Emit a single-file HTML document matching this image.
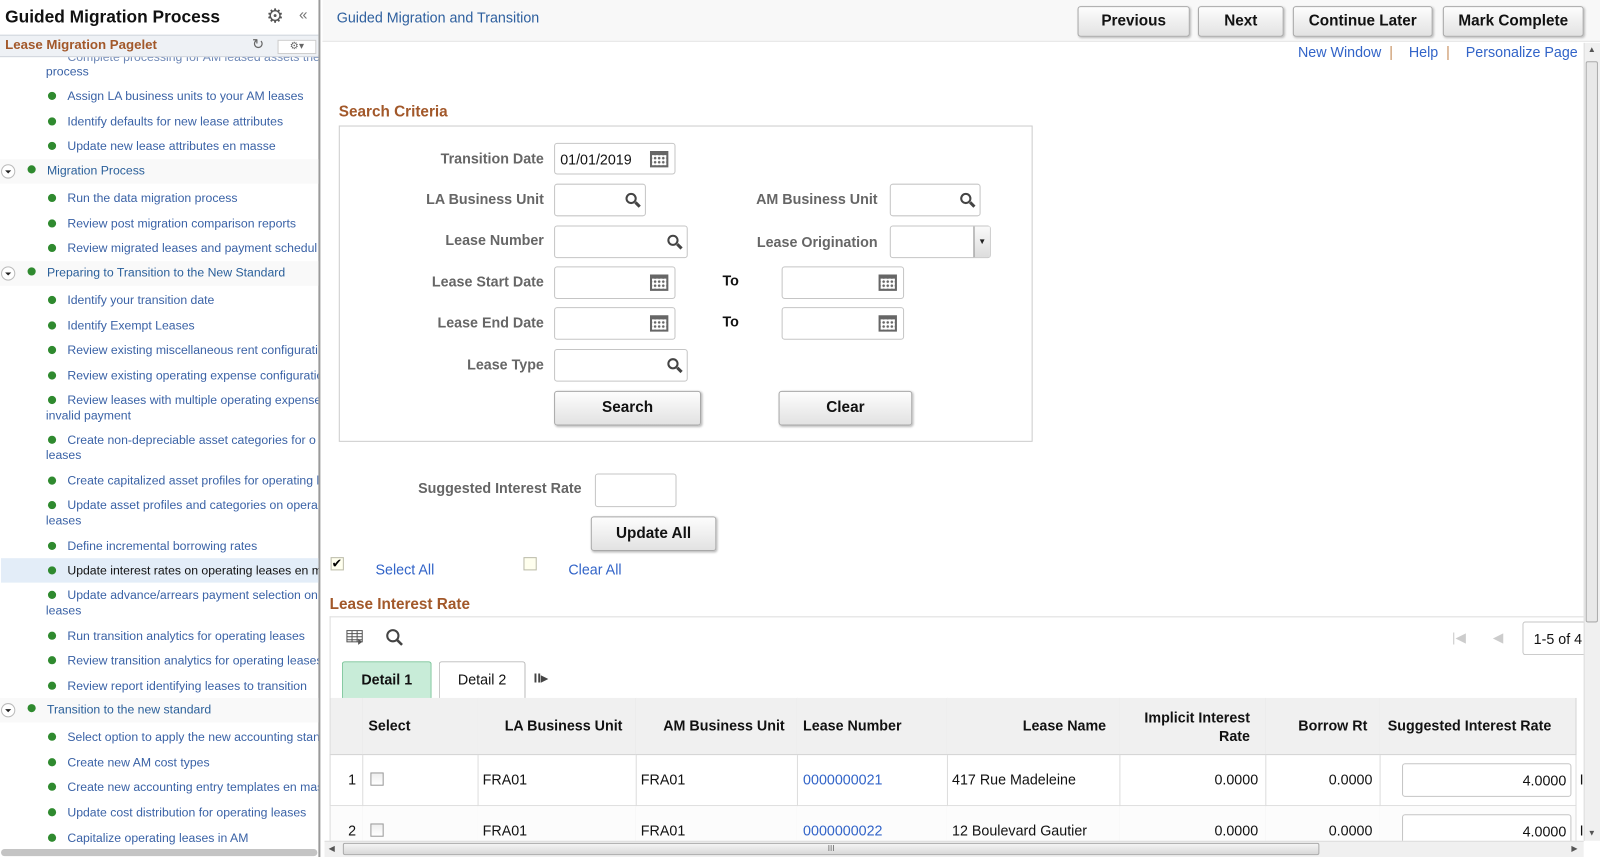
<!DOCTYPE html>
<html><head><meta charset="utf-8"><style>
*{margin:0;padding:0;box-sizing:border-box}
html,body{width:1600px;height:857px;overflow:hidden;background:#fff}
body{font-family:"Liberation Sans",Arial,sans-serif;position:relative}
#wrap{position:absolute;left:0;top:0;width:1568px;height:840px;transform:scale(1.0204);transform-origin:0 0;overflow:hidden}
.a{position:absolute;white-space:nowrap}
#left{position:absolute;left:0;top:0;width:314px;height:840px;border-right:2px solid #9a9a9a;overflow:hidden}
.it{position:absolute;left:0;width:314px;font-size:12px;color:#3a62a6;line-height:15px;white-space:nowrap}
.it .b{position:absolute;left:47px;top:3px;width:8px;height:8px;border-radius:50%;background:#2f8a2f}
.it span.t{position:absolute;left:66px}
.it span.w{position:absolute;left:45px;top:15px}
.sec{position:absolute;left:0;width:314px;height:24px;background:#f9f9f9;font-size:12px;color:#2a5f9a}
.sec .c{position:absolute;left:1px;top:5px;width:14px;height:14px;border:1px solid #bbb;border-radius:50%;background:#fff}
.sec .c:after{content:"";position:absolute;left:3px;top:5px;border-left:3px solid transparent;border-right:3px solid transparent;border-top:3px solid #222}
.sec .b{position:absolute;left:27px;top:6px;width:8px;height:8px;border-radius:50%;background:#2f8a2f}
.sec span{position:absolute;left:46px;top:4px}
.btn{position:absolute;border:1px solid #a8a8a8;border-radius:3px;background:linear-gradient(#fdfdfd,#e2e2e2);font-weight:bold;font-size:15px;text-align:center;color:#111;box-shadow:1px 1px 2px #bbb}
.lbl{position:absolute;font-weight:bold;font-size:14px;color:#666;text-align:right;white-space:nowrap}
.inp{position:absolute;border:1px solid #c5c5c5;border-radius:3px;background:#fff;font-size:14px}
.cal{position:absolute;right:6px;top:7px;width:18px;height:16px;border:2px solid #666;border-top-width:4px;background:radial-gradient(circle,#666 1px,transparent 1.5px) 1px 1px/4px 4px}
.mag{position:absolute;right:8px;top:8px;width:11px;height:11px;border:2.5px solid #444;border-radius:50%}
.mag:after{content:"";position:absolute;left:7px;top:8px;width:6px;height:2.5px;background:#444;transform:rotate(45deg)}
.lnk{color:#3264c8;font-size:14px}
.th{position:absolute;top:684px;height:56px;background:#f0f0f0;border-right:1px solid #d4d4d4;border-bottom:1px solid #d4d4d4;font-weight:bold;font-size:14px;color:#111}
.td{position:absolute;height:50px;border-right:1px solid #ddd;border-bottom:1px solid #ddd;font-size:14px;color:#111}
</style></head><body><div id="wrap">

<div id="left">
 <div class="it" style="top:55px"><span class="w" style="top:8px">process</span><span class="t" style="top:-6px;color:#6a85b5">Complete processing for AM leased assets the</span></div>
 <div class="a" style="left:0;top:0;width:314px;height:34px;background:#fff"></div>
 <div class="a" style="left:5px;top:7px;font-weight:bold;font-size:17px;color:#111">Guided Migration Process</div>
 <div class="a" style="left:261px;top:5px;font-size:19px;color:#555">⚙</div>
 <div class="a" style="left:293px;top:6px;font-size:15px;color:#777">«</div>
 <div class="a" style="left:0;top:34px;width:314px;height:22px;background:#eef1f5;border-top:1px solid #d0d5dc;border-bottom:1px solid #d0d5dc"></div>
 <div class="a" style="left:5px;top:36px;font-weight:bold;font-size:13px;color:#a2582a">Lease Migration Pagelet</div>
 <div class="a" style="left:247px;top:35px;font-size:14px;color:#666">↻</div>
 <div class="a" style="left:272px;top:39px;width:38px;height:14px;border:1px solid #ccc;background:#fff;font-size:10px;color:#666;text-align:center;line-height:12px">⚙▾</div>

 <div class="it" style="top:87px"><i class="b"></i><span class="t">Assign LA business units to your AM leases</span></div>
 <div class="it" style="top:112px"><i class="b"></i><span class="t">Identify defaults for new lease attributes</span></div>
 <div class="it" style="top:136px"><i class="b"></i><span class="t">Update new lease attributes en masse</span></div>
 <div class="sec" style="top:156px"><i class="c"></i><i class="b"></i><span>Migration Process</span></div>
 <div class="it" style="top:187px"><i class="b"></i><span class="t">Run the data migration process</span></div>
 <div class="it" style="top:212px"><i class="b"></i><span class="t">Review post migration comparison reports</span></div>
 <div class="it" style="top:236px"><i class="b"></i><span class="t">Review migrated leases and payment schedul</span></div>
 <div class="sec" style="top:256px"><i class="c"></i><i class="b"></i><span>Preparing to Transition to the New Standard</span></div>
 <div class="it" style="top:287px"><i class="b"></i><span class="t">Identify your transition date</span></div>
 <div class="it" style="top:312px"><i class="b"></i><span class="t">Identify Exempt Leases</span></div>
 <div class="it" style="top:336px"><i class="b"></i><span class="t">Review existing miscellaneous rent configurati</span></div>
 <div class="it" style="top:361px"><i class="b"></i><span class="t">Review existing operating expense configuratio</span></div>
 <div class="it" style="top:385px"><i class="b"></i><span class="t">Review leases with multiple operating expense</span><span class="w">invalid payment</span></div>
 <div class="it" style="top:424px"><i class="b"></i><span class="t">Create non-depreciable asset categories for o</span><span class="w">leases</span></div>
 <div class="it" style="top:464px"><i class="b"></i><span class="t">Create capitalized asset profiles for operating l</span></div>
 <div class="it" style="top:488px"><i class="b"></i><span class="t">Update asset profiles and categories on opera</span><span class="w">leases</span></div>
 <div class="it" style="top:528px"><i class="b"></i><span class="t">Define incremental borrowing rates</span></div>
 <div class="a" style="left:1px;top:547px;width:313px;height:24px;background:#e3edf8"></div>
 <div class="it" style="top:552px"><i class="b"></i><span class="t" style="color:#111">Update interest rates on operating leases en m</span></div>
 <div class="it" style="top:576px"><i class="b"></i><span class="t">Update advance/arrears payment selection on</span><span class="w">leases</span></div>
 <div class="it" style="top:616px"><i class="b"></i><span class="t">Run transition analytics for operating leases</span></div>
 <div class="it" style="top:640px"><i class="b"></i><span class="t">Review transition analytics for operating leases</span></div>
 <div class="it" style="top:665px"><i class="b"></i><span class="t">Review report identifying leases to transition</span></div>
 <div class="sec" style="top:684px"><i class="c"></i><i class="b"></i><span>Transition to the new standard</span></div>
 <div class="it" style="top:715px"><i class="b"></i><span class="t">Select option to apply the new accounting stan</span></div>
 <div class="it" style="top:740px"><i class="b"></i><span class="t">Create new AM cost types</span></div>
 <div class="it" style="top:764px"><i class="b"></i><span class="t">Create new accounting entry templates en mas</span></div>
 <div class="it" style="top:789px"><i class="b"></i><span class="t">Update cost distribution for operating leases</span></div>
 <div class="it" style="top:814px"><i class="b"></i><span class="t">Capitalize operating leases in AM</span></div>
 <div class="a" style="left:1px;top:832px;width:310px;height:7px;border-radius:4px;background:#c4c4c4"></div>
</div>

<!-- header -->
<div class="a" style="left:316px;top:0;width:1252px;height:41px;background:#f8f8f8;border-bottom:1px solid #e6e6e6"></div>
<div class="a" style="left:330px;top:9px;font-size:14px;color:#2d5f9e">Guided Migration and Transition</div>
<div class="btn" style="left:1056px;top:6px;width:110px;height:30px;line-height:28px">Previous</div>
<div class="btn" style="left:1174px;top:6px;width:84px;height:30px;line-height:28px">Next</div>
<div class="btn" style="left:1267px;top:6px;width:137px;height:30px;line-height:28px">Continue Later</div>
<div class="btn" style="left:1414px;top:6px;width:138px;height:30px;line-height:28px">Mark Complete</div>
<div class="a lnk" style="left:1272px;top:43px">New Window <span style="color:#c89060">&nbsp;|&nbsp;</span> &nbsp; Help <span style="color:#c89060">&nbsp;|&nbsp;</span> &nbsp; Personalize Page</div>

<!-- Search criteria -->
<div class="a" style="left:332px;top:101px;font-weight:bold;font-size:15px;color:#a2582a">Search Criteria</div>
<div class="a" style="left:332px;top:123px;width:680px;height:310px;border:1px solid #ccc"></div>
<div class="lbl" style="right:1035px;top:147px">Transition Date</div>
<div class="inp" style="left:543px;top:140px;width:119px;height:31px"><span class="a" style="left:5px;top:7px;color:#111">01/01/2019</span><i class="cal"></i></div>
<div class="lbl" style="right:1035px;top:187px">LA Business Unit</div>
<div class="inp" style="left:543px;top:180px;width:90px;height:32px"><i class="mag"></i></div>
<div class="lbl" style="right:1035px;top:227px">Lease Number</div>
<div class="inp" style="left:543px;top:221px;width:131px;height:32px"><i class="mag"></i></div>
<div class="lbl" style="right:1035px;top:268px">Lease Start Date</div>
<div class="inp" style="left:543px;top:261px;width:119px;height:32px"><i class="cal"></i></div>
<div class="lbl" style="right:1035px;top:308px">Lease End Date</div>
<div class="inp" style="left:543px;top:301px;width:119px;height:32px"><i class="cal"></i></div>
<div class="lbl" style="right:1035px;top:349px">Lease Type</div>
<div class="inp" style="left:543px;top:342px;width:131px;height:32px"><i class="mag"></i></div>
<div class="lbl" style="right:708px;top:187px">AM Business Unit</div>
<div class="inp" style="left:872px;top:180px;width:89px;height:32px"><i class="mag"></i></div>
<div class="lbl" style="right:708px;top:229px">Lease Origination</div>
<div class="inp" style="left:872px;top:221px;width:99px;height:32px"><div class="a" style="right:0;top:0;width:16px;height:30px;border-left:1px solid #888;background:linear-gradient(#fafafa,#ddd);font-size:8px;text-align:center;line-height:30px;color:#222">▼</div></div>
<div class="a" style="left:708px;top:267px;font-weight:bold;font-size:14px;color:#111">To</div>
<div class="inp" style="left:766px;top:261px;width:120px;height:32px"><i class="cal"></i></div>
<div class="a" style="left:708px;top:307px;font-weight:bold;font-size:14px;color:#111">To</div>
<div class="inp" style="left:766px;top:301px;width:120px;height:32px"><i class="cal"></i></div>
<div class="btn" style="left:543px;top:383px;width:144px;height:34px;line-height:32px">Search</div>
<div class="btn" style="left:763px;top:383px;width:131px;height:34px;line-height:32px">Clear</div>

<div class="lbl" style="right:998px;top:470px">Suggested Interest Rate</div>
<div class="inp" style="left:583px;top:464px;width:80px;height:33px"></div>
<div class="btn" style="left:579px;top:506px;width:123px;height:34px;line-height:32px">Update All</div>
<div class="a" style="left:324px;top:546px;width:13px;height:13px;border:1px solid #bba;background:#ffe;font-size:12px;line-height:10px;color:#000">✔</div>
<div class="a lnk" style="left:368px;top:550px">Select All</div>
<div class="a" style="left:513px;top:546px;width:13px;height:13px;border:1px solid #bba;background:#ffe"></div>
<div class="a lnk" style="left:557px;top:550px">Clear All</div>

<!-- grid -->
<div class="a" style="left:323px;top:584px;font-weight:bold;font-size:15px;color:#a2582a">Lease Interest Rate</div>
<div class="a" style="left:323px;top:604px;width:1229px;height:220px;border-left:1px solid #ddd;border-top:1px solid #ddd"></div>
<svg class="a" style="left:339px;top:617px" width="18" height="16"><rect x="1" y="1" width="15" height="11" fill="none" stroke="#555"/><path d="M1 4h15M1 7h15M1 10h15M6 1v11M11 1v11" stroke="#555"/><path d="M12 9l4 3-4 3z" fill="#555"/></svg>
<svg class="a" style="left:378px;top:616px" width="18" height="18"><circle cx="7" cy="7" r="5.5" fill="none" stroke="#444" stroke-width="2"/><path d="M11 11l5 5" stroke="#444" stroke-width="2.5"/></svg>
<div class="a" style="left:1423px;top:617px;font-size:13px;color:#ccc">|◀</div>
<div class="a" style="left:1463px;top:617px;font-size:13px;color:#ccc">◀</div>
<div class="inp" style="left:1492px;top:609px;width:62px;height:33px;border-right:none"><span class="a" style="left:10px;top:8px;color:#111">1-5 of 4</span></div>

<div class="a" style="left:335px;top:648px;width:88px;height:36px;background:#c8ecd8;border:1px solid #7cc49a;border-bottom:none;border-radius:3px 3px 0 0;font-weight:bold;font-size:14px;text-align:center;line-height:35px;color:#111">Detail 1</div>
<div class="a" style="left:430px;top:648px;width:85px;height:36px;background:#fff;border:1px solid #bbb;border-bottom:none;border-radius:3px 3px 0 0;font-size:14px;text-align:center;line-height:35px;color:#111">Detail 2</div>
<div class="a" style="left:523px;top:657px;font-size:13px;color:#444;font-weight:bold">II▸</div>

<div class="th" style="left:323px;width:33px;border-left:1px solid #ddd"></div>
<div class="th" style="left:355px;width:114px"><span class="a" style="left:6px;top:19px">Select</span></div>
<div class="th" style="left:468px;width:156px"><span class="a" style="right:13px;top:19px">LA Business Unit</span></div>
<div class="th" style="left:623px;width:159px"><span class="a" style="right:12px;top:19px">AM Business Unit</span></div>
<div class="th" style="left:781px;width:148px"><span class="a" style="left:6px;top:19px">Lease Number</span></div>
<div class="th" style="left:928px;width:170px"><span class="a" style="right:13px;top:19px">Lease Name</span></div>
<div class="th" style="left:1097px;width:144px"><span class="a" style="right:15px;top:10px;text-align:right;line-height:18px">Implicit Interest<br>Rate</span></div>
<div class="th" style="left:1240px;width:113px"><span class="a" style="right:12px;top:19px">Borrow Rt</span></div>
<div class="th" style="left:1352px;width:193px"><span class="a" style="left:8px;top:19px">Suggested Interest Rate</span></div>

<!-- rows -->
<div class="td" style="left:323px;top:740px;width:33px;border-left:1px solid #ddd"><span class="a" style="right:6px;top:16px">1</span></div>
<div class="td" style="left:355px;top:740px;width:114px"><span class="a" style="left:8px;top:17px;width:13px;height:13px;border:1px solid #999;background:linear-gradient(#eee,#fff)"></span></div>
<div class="td" style="left:468px;top:740px;width:156px"><span class="a" style="left:5px;top:16px">FRA01</span></div>
<div class="td" style="left:623px;top:740px;width:159px"><span class="a" style="left:5px;top:16px">FRA01</span></div>
<div class="td" style="left:781px;top:740px;width:148px"><span class="a" style="left:6px;top:16px;color:#3264c8">0000000021</span></div>
<div class="td" style="left:928px;top:740px;width:170px"><span class="a" style="left:5px;top:16px">417 Rue Madeleine</span></div>
<div class="td" style="left:1097px;top:740px;width:144px"><span class="a" style="right:7px;top:16px">0.0000</span></div>
<div class="td" style="left:1240px;top:740px;width:113px"><span class="a" style="right:7px;top:16px">0.0000</span></div>
<div class="td" style="left:1352px;top:740px;width:193px"><div class="inp" style="left:22px;top:8px;width:166px;height:33px"><span class="a" style="right:4px;top:8px;color:#111">4.0000</span></div></div>
<div class="a" style="left:1548px;top:756px;font-size:14px;color:#111">I</div>

<div class="td" style="left:323px;top:790px;width:33px;border-left:1px solid #ddd;background:#fcfcfc"><span class="a" style="right:6px;top:16px">2</span></div>
<div class="td" style="left:355px;top:790px;width:114px;background:#fcfcfc"><span class="a" style="left:8px;top:17px;width:13px;height:13px;border:1px solid #999;background:linear-gradient(#eee,#fff)"></span></div>
<div class="td" style="left:468px;top:790px;width:156px;background:#fcfcfc"><span class="a" style="left:5px;top:16px">FRA01</span></div>
<div class="td" style="left:623px;top:790px;width:159px;background:#fcfcfc"><span class="a" style="left:5px;top:16px">FRA01</span></div>
<div class="td" style="left:781px;top:790px;width:148px;background:#fcfcfc"><span class="a" style="left:6px;top:16px;color:#3264c8">0000000022</span></div>
<div class="td" style="left:928px;top:790px;width:170px;background:#fcfcfc"><span class="a" style="left:5px;top:16px">12 Boulevard Gautier</span></div>
<div class="td" style="left:1097px;top:790px;width:144px;background:#fcfcfc"><span class="a" style="right:7px;top:16px">0.0000</span></div>
<div class="td" style="left:1240px;top:790px;width:113px;background:#fcfcfc"><span class="a" style="right:7px;top:16px">0.0000</span></div>
<div class="td" style="left:1352px;top:790px;width:193px;background:#fcfcfc"><div class="inp" style="left:22px;top:8px;width:166px;height:33px"><span class="a" style="right:4px;top:8px;color:#111">4.0000</span></div></div>
<div class="a" style="left:1548px;top:806px;font-size:14px;color:#111">I</div>

<!-- vertical scrollbar -->
<div class="a" style="left:1552px;top:42px;width:16px;height:782px;background:#f0f0f0;border-left:1px solid #ddd"></div>
<div class="a" style="left:1554px;top:60px;width:12px;height:550px;background:#e8e8e8;border:1px solid #aaa;border-radius:2px"></div>
<div class="a" style="left:1556px;top:44px;font-size:8px;color:#555">▲</div>
<div class="a" style="left:1556px;top:812px;font-size:8px;color:#555">▼</div>
<!-- horizontal scrollbar -->
<div class="a" style="left:318px;top:824px;width:1234px;height:16px;background:#f0f0f0;border-top:1px solid #ddd"></div>
<div class="a" style="left:336px;top:826px;width:957px;height:12px;background:linear-gradient(#f4f4f4,#d8d8d8);border:1px solid #aaa;border-radius:2px;font-size:8px;text-align:center;color:#666;line-height:10px">III</div>
<div class="a" style="left:322px;top:827px;font-size:8px;color:#555">◀</div>
<div class="a" style="left:1540px;top:827px;font-size:8px;color:#555">▶</div>
</div></body></html>
